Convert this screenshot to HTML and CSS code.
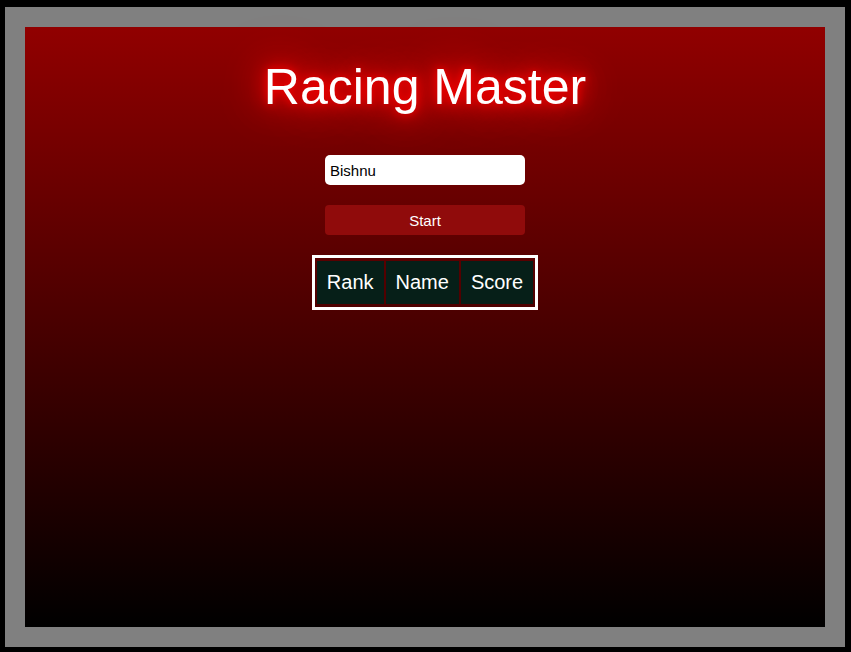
FILE: index.html
```html
<!DOCTYPE html>
<html>
<head>
<meta charset="utf-8">
<link rel="stylesheet" href="styles.css">
</head>
<body>
<div class="game">
  <h1 class="title">Racing Master</h1>
  <input class="name-input" type="text" value="Bishnu">
  <button class="start-btn">Start</button>
  <table class="scores">
    <thead>
      <tr><th>Rank</th><th>Name</th><th>Score</th></tr>
    </thead>
  </table>
</div>
</body>
</html>
```
FILE: styles.css
```css
html, body {
  margin: 0;
  padding: 0;
  background: #000;
  height: 100%;
}
body {
  padding: 7px 0 0 5px;
  box-sizing: border-box;
  font-family: "Liberation Sans", Arial, sans-serif;
}
.game {
  width: 800px;
  height: 600px;
  box-sizing: content-box;
  border: 20px solid #808080;
  background: linear-gradient(to bottom, #910000 0%, #000 100%);
  display: flex;
  flex-direction: column;
  align-items: center;
}
.title {
  margin: 31px 0 0;
  font-size: 50px;
  line-height: 58px;
  font-weight: normal;
  color: #fff;
  text-shadow: 0 0 8px #ff0000, 0 0 18px #ff0000, 0 0 36px #ff0000, 0 0 50px #ff0000;
}
.name-input {
  margin-top: 39px;
  width: 200px;
  height: 30px;
  box-sizing: border-box;
  border: none;
  border-radius: 5px;
  padding: 0 5px;
  font-family: "Liberation Sans", Arial, sans-serif;
  font-size: 15px;
  color: #000;
  background: #fff;
  outline: none;
}
.start-btn {
  margin-top: 20px;
  width: 200px;
  height: 30px;
  border: none;
  border-radius: 4px;
  background: #900b0b;
  color: #fff;
  font-family: "Liberation Sans", Arial, sans-serif;
  font-size: 15px;
  padding: 0;
}
.scores {
  margin-top: 20px;
  border: 3px solid #fff;
  border-spacing: 2px 3px;
}
.scores th {
  background: #061f18;
  color: #fff;
  font-weight: normal;
  font-size: 20px;
  padding: 10px;
}
```
